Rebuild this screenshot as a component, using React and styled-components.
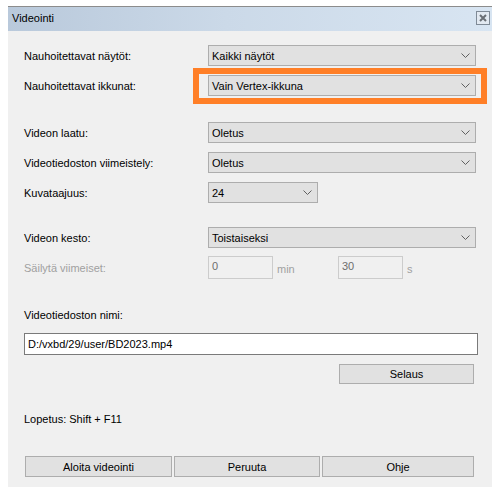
import styled, { createGlobalStyle } from "styled-components";

const Global = createGlobalStyle`
  html, body {
    margin: 0;
    padding: 0;
    background: #ffffff;
  }
  body {
    font-family: "Liberation Sans", Arial, sans-serif;
    font-size: 11px;
    color: #000000;
  }
`;

const Frame = styled.div`
  padding-top: 6px;
  width: 492px;
`;

const Window = styled.div`
  border-top: 1px solid #8c8c8c;
  margin-left: 8px;
  width: 484px;
`;

const TitleBar = styled.div`
  height: 24px;
  display: flex;
  align-items: center;
  justify-content: space-between;
  padding: 0 2px 0 4px;
  background: linear-gradient(to right, #b9c9db 0%, #cbd9e8 45%, #d8e5f2 100%);
`;

const Title = styled.span`
  font-size: 11px;
  color: #000000;
  margin-top: -2px;
`;

const CloseBox = styled.button`
  width: 14px;
  height: 14px;
  padding: 0;
  margin-top: -2px;
  border: 1px solid #7f8a96;
  background: #e2e9f1;
  display: flex;
  align-items: center;
  justify-content: center;
`;

const Body = styled.div`
  height: 456px;
  background: #f0f0f0;
  padding: 0 16px 0 16px;
  display: flex;
  flex-direction: column;
`;

const Row = styled.div`
  display: grid;
  grid-template-columns: 184px 1fr;
  align-items: center;
  margin-top: ${(p) => p.$space}px;
  position: relative;
`;

const Label = styled.span`
  color: ${(p) => (p.$disabled ? "#a0a0a0" : "#000000")};
`;

const Select = styled.div`
  height: 21px;
  box-sizing: border-box;
  width: ${(p) => (p.$width ? `${p.$width}px` : "100%")};
  border: 1px solid #adadad;
  background: #e1e1e1;
  display: flex;
  align-items: center;
  justify-content: space-between;
  padding: 0 5px 0 3px;
`;

const Highlight = styled.div`
  position: absolute;
  left: 169px;
  right: -11px;
  top: -7px;
  bottom: -8px;
  border: 6px solid #ff7f27;
  pointer-events: none;
`;

const Split = styled.div`
  display: flex;
  align-items: center;
`;

const NumField = styled.div`
  width: 65px;
  height: 23px;
  box-sizing: border-box;
  border: 1px solid #cccccc;
  background: #f0f0f0;
  color: #6d6d6d;
  padding: 3px 3px 0 3px;
`;

const Unit = styled.span`
  width: 65px;
  box-sizing: border-box;
  padding: 2px 0 0 4px;
  color: #a0a0a0;
`;

const Caption = styled.div`
  margin-top: ${(p) => p.$space}px;
  line-height: 14px;
`;

const PathField = styled.div`
  margin-top: 11px;
  height: 22px;
  width: 454px;
  box-sizing: border-box;
  border: 1px solid #7a7a7a;
  background: #ffffff;
  display: flex;
  align-items: center;
  padding: 0 3px;
`;

const Button = styled.button`
  height: ${(p) => p.$height || 21}px;
  box-sizing: border-box;
  border: 1px solid #adadad;
  background: #e1e1e1;
  font-family: inherit;
  font-size: 11px;
  color: #000000;
  padding: 0;
`;

const BrowseRow = styled.div`
  margin-top: 9px;
  display: flex;
  justify-content: flex-end;
  padding-right: 2px;
`;

const Footer = styled.div`
  margin-top: 30px;
  margin-left: 1px;
  display: grid;
  grid-template-columns: 147px 146px 152px;
  column-gap: 2px;
`;

function Chevron() {
  return (
    <svg width="9" height="5" viewBox="0 0 9 5">
      <path d="M0.5 0.5 L4.5 4.5 L8.5 0.5" fill="none" stroke="#606060" strokeWidth="1" />
    </svg>
  );
}

function Combo({ value, width }) {
  return (
    <Select $width={width}>
      <span>{value}</span>
      <Chevron />
    </Select>
  );
}

export default function App() {
  return (
    <Frame>
      <Global />
      <Window>
        <TitleBar>
          <Title>Videointi</Title>
          <CloseBox>
            <svg width="8" height="8" viewBox="0 0 8 8">
              <path d="M1 1 L7 7 M7 1 L1 7" stroke="#6a6f75" strokeWidth="2" />
            </svg>
          </CloseBox>
        </TitleBar>
        <Body>
          <Row $space={14}>
            <Label>Nauhoitettavat näytöt:</Label>
            <Combo value="Kaikki näytöt" />
          </Row>
          <Row $space={9}>
            <Label>Nauhoitettavat ikkunat:</Label>
            <Combo value="Vain Vertex-ikkuna" />
            <Highlight />
          </Row>
          <Row $space={26}>
            <Label>Videon laatu:</Label>
            <Combo value="Oletus" />
          </Row>
          <Row $space={9}>
            <Label>Videotiedoston viimeistely:</Label>
            <Combo value="Oletus" />
          </Row>
          <Row $space={9}>
            <Label>Kuvataajuus:</Label>
            <Combo value="24" width={110} />
          </Row>
          <Row $space={24}>
            <Label>Videon kesto:</Label>
            <Combo value="Toistaiseksi" />
          </Row>
          <Row $space={8}>
            <Label $disabled>Säilytä viimeiset:</Label>
            <Split>
              <NumField>0</NumField>
              <Unit>min</Unit>
              <NumField>30</NumField>
              <Unit>s</Unit>
            </Split>
          </Row>
          <Caption $space={29}>Videotiedoston nimi:</Caption>
          <PathField>D:/vxbd/29/user/BD2023.mp4</PathField>
          <BrowseRow>
            <Button style={{ width: 135 }} $height={20}>
              Selaus
            </Button>
          </BrowseRow>
          <Caption $space={28}>Lopetus: Shift + F11</Caption>
          <Footer>
            <Button>Aloita videointi</Button>
            <Button>Peruuta</Button>
            <Button>Ohje</Button>
          </Footer>
        </Body>
      </Window>
    </Frame>
  );
}
